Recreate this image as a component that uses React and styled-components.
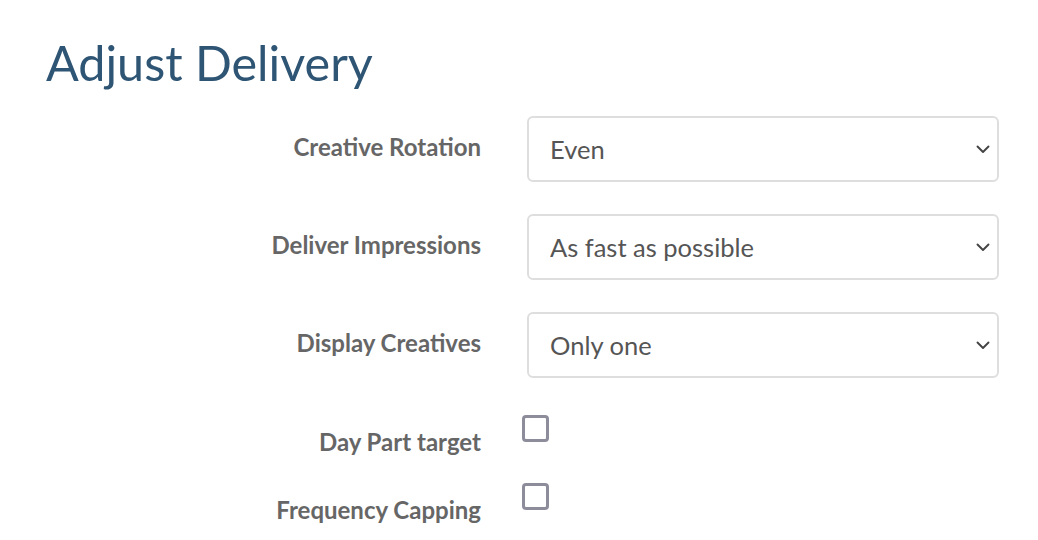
import React from 'react'
import styled, { createGlobalStyle } from 'styled-components'

const GlobalStyle = createGlobalStyle`
  body {
    margin: 0;
    background: #fff;
    font-family: Lato, "Open Sans", sans-serif;
  }
`

const Page = styled.div`
  padding: 32px 0 0 46px;
  width: 1038px;
  height: 540px;
  box-sizing: border-box;
  overflow: hidden;
`

const Title = styled.h1`
  margin: 0 0 24px 0;
  font-size: 48.5px;
  line-height: 60px;
  font-weight: 400;
  color: #2f5575;
`

const Form = styled.div`
  display: flex;
  flex-direction: column;
`

const Row = styled.div`
  display: grid;
  grid-template-columns: 435px 472px;
  column-gap: 46px;
  align-items: ${p => (p.$check ? 'start' : 'center')};
  margin-bottom: ${p => p.$gap}px;
`

const Label = styled.label`
  text-align: right;
  font-size: 24px;
  font-weight: 700;
  color: #666;
  line-height: 24px;
  padding-top: ${p => p.$top || 0}px;
  padding-bottom: ${p => p.$bottom || 0}px;
`

const SelectWrap = styled.div`
  position: relative;
  height: 66px;
`

const Select = styled.select`
  appearance: none;
  -webkit-appearance: none;
  width: 100%;
  height: 100%;
  box-sizing: border-box;
  border: 2px solid #dedede;
  border-radius: 6px;
  background: #fff;
  padding: 0 40px 0 21px;
  font-family: Lato, "Open Sans", sans-serif;
  font-size: 25.5px;
  color: #555;
  outline: none;
`

const Chevron = styled.svg`
  position: absolute;
  right: 9px;
  top: 50%;
  margin-top: -4px;
  width: 14px;
  height: 9px;
  pointer-events: none;
`

const Box = styled.span`
  display: block;
  width: 27px;
  height: 27px;
  box-sizing: border-box;
  border: 3px solid #8d8c9b;
  border-radius: 4px;
  margin-left: -5px;
  background: #fff;
`

const selects = [
  { label: 'Creative Rotation', value: 'Even' },
  { label: 'Deliver Impressions', value: 'As fast as possible' },
  { label: 'Display Creatives', value: 'Only one' },
]

const checks = ['Day Part target', 'Frequency Capping']

export default function App() {
  return (
    <Page>
      <GlobalStyle />
      <Title>Adjust Delivery</Title>
      <Form>
        {selects.map((s, i) => (
          <Row key={s.label} $gap={i === selects.length - 1 ? 37 : 32}>
            <Label $bottom={4}>{s.label}</Label>
            <SelectWrap>
              <Select defaultValue={s.value}>
                <option>{s.value}</option>
              </Select>
              <Chevron viewBox="0 0 14 9">
                <path d="M1.5 1.5 L7 7 L12.5 1.5" fill="none" stroke="#444" strokeWidth="1.9" strokeLinecap="round" strokeLinejoin="round" />
              </Chevron>
            </SelectWrap>
          </Row>
        ))}
        {checks.map(c => (
          <Row key={c} $check $gap={29}>
            <Label $top={15}>{c}</Label>
            <Box />
          </Row>
        ))}
      </Form>
    </Page>
  )
}
